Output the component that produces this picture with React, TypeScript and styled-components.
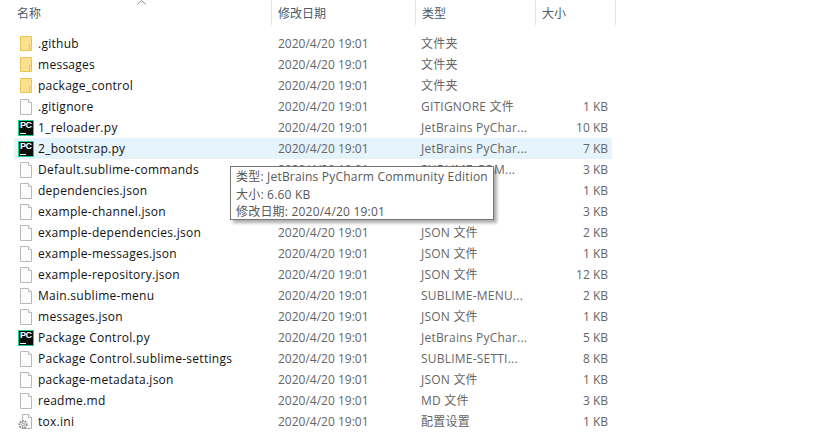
import styled, { createGlobalStyle } from 'styled-components';

type FileKind = 'folder' | 'file' | 'pycharm' | 'config';

type FileRow = {
  name: string;
  kind: FileKind;
  type: string;
  size?: string;
  hovered?: boolean;
};

const DATE = '2020/4/20 19:01';

const rows: FileRow[] = [
  { name: '.github', kind: 'folder', type: '文件夹' },
  { name: 'messages', kind: 'folder', type: '文件夹' },
  { name: 'package_control', kind: 'folder', type: '文件夹' },
  { name: '.gitignore', kind: 'file', type: 'GITIGNORE 文件', size: '1 KB' },
  { name: '1_reloader.py', kind: 'pycharm', type: 'JetBrains PyChar...', size: '10 KB' },
  { name: '2_bootstrap.py', kind: 'pycharm', type: 'JetBrains PyChar...', size: '7 KB', hovered: true },
  { name: 'Default.sublime-commands', kind: 'file', type: 'SUBLIME-COM...', size: '3 KB' },
  { name: 'dependencies.json', kind: 'file', type: 'JSON 文件', size: '1 KB' },
  { name: 'example-channel.json', kind: 'file', type: 'JSON 文件', size: '3 KB' },
  { name: 'example-dependencies.json', kind: 'file', type: 'JSON 文件', size: '2 KB' },
  { name: 'example-messages.json', kind: 'file', type: 'JSON 文件', size: '1 KB' },
  { name: 'example-repository.json', kind: 'file', type: 'JSON 文件', size: '12 KB' },
  { name: 'Main.sublime-menu', kind: 'file', type: 'SUBLIME-MENU...', size: '2 KB' },
  { name: 'messages.json', kind: 'file', type: 'JSON 文件', size: '1 KB' },
  { name: 'Package Control.py', kind: 'pycharm', type: 'JetBrains PyChar...', size: '5 KB' },
  { name: 'Package Control.sublime-settings', kind: 'file', type: 'SUBLIME-SETTI...', size: '8 KB' },
  { name: 'package-metadata.json', kind: 'file', type: 'JSON 文件', size: '1 KB' },
  { name: 'readme.md', kind: 'file', type: 'MD 文件', size: '3 KB' },
  { name: 'tox.ini', kind: 'config', type: '配置设置', size: '1 KB' },
];

const GlobalStyle = createGlobalStyle`
  html, body {
    margin: 0;
    background: #fff;
    overflow: hidden;
  }
  body {
    font-family: "Open Sans", "Noto Sans CJK SC", sans-serif;
    font-size: 12px;
  }
`;

const Page = styled.div`
  position: relative;
  width: 837px;
  height: 440px;
  overflow: hidden;
  background: #fff;
`;

const Header = styled.div`
  display: grid;
  grid-template-columns: 272px 144px 120px 80px;
  height: 27px;
  margin-bottom: 6px;
`;

const HeaderCell = styled.div<{ $pad: number }>`
  position: relative;
  padding: 2px 0 0 ${({ $pad }) => $pad}px;
  height: 25px;
  line-height: 23px;
  color: #4c5a6b;
  border-right: 1px solid #e5e5e5;
  box-sizing: border-box;
`;

const SortArrow = styled.svg`
  position: absolute;
  left: 136px;
  top: 0;
`;

const List = styled.div`
  display: flex;
  flex-direction: column;
  width: 598px;
  margin-left: 14px;
`;

const Row = styled.div<{ $hovered?: boolean }>`
  display: grid;
  grid-template-columns: 258px 143px 129px 64px;
  align-items: center;
  height: 21px;
  padding-right: 4px;
  line-height: 16px;
  background: ${({ $hovered }) => ($hovered ? '#e5f3fb' : 'transparent')};
`;

const NameCell = styled.div`
  display: flex;
  align-items: center;
  gap: 4px;
  padding-left: 4px;
  color: #111;
  letter-spacing: 0.27px;
  white-space: nowrap;
`;

const MetaCell = styled.div<{ $spaced?: boolean }>`
  padding-left: 6px;
  color: #666;
  letter-spacing: ${({ $spaced }) => ($spaced ? '0.22px' : '0')};
  white-space: nowrap;
`;

const SizeCell = styled.div`
  color: #666;
  text-align: right;
  white-space: nowrap;
`;

const IconSlot = styled.span`
  display: inline-flex;
  flex: none;
  width: 16px;
  height: 16px;
  align-items: center;
  justify-content: center;
`;

const PyBadge = styled.span`
  position: relative;
  display: block;
  width: 16px;
  height: 16px;
  box-sizing: border-box;
  background: #0b0f0e;
  border: 1px solid #17d68c;
  color: #fff;
  font-family: "Liberation Sans", sans-serif;
  font-weight: 700;
  font-size: 9px;
  line-height: 9px;
  letter-spacing: -0.4px;
  padding-left: 1px;

  &::after {
    content: '';
    position: absolute;
    left: 1px;
    bottom: 1px;
    width: 6px;
    height: 1px;
    background: #fff;
  }
`;

const Tooltip = styled.div`
  position: absolute;
  left: 230px;
  top: 166px;
  width: 264px;
  height: 54px;
  box-sizing: border-box;
  padding: 1px 5px;
  background: #fff;
  border: 1px solid #767676;
  box-shadow: 3px 3px 3px rgba(0, 0, 0, 0.32);
  color: #575757;
  line-height: 17.5px;
  letter-spacing: 0.2px;
  white-space: nowrap;
`;

const FileIcon = ({ kind }: { kind: FileKind }) => {
  if (kind === 'pycharm') {
    return <PyBadge>PC</PyBadge>;
  }
  if (kind === 'folder') {
    return (
      <svg width="16" height="16" viewBox="0 0 16 16">
        <path d="M2.5 0.5 H13.5 V14.5 H2.5 Z" fill="#fbe08f" stroke="#ecc550" />
        <path d="M11.5 14.5 V8.5 H13.5" fill="none" stroke="#ecc550" />
      </svg>
    );
  }
  if (kind === 'config') {
    return (
      <svg width="16" height="16" viewBox="0 0 16 16" overflow="visible">
        <path d="M4.5 0.5 H10.5 L13.5 3.5 V14.5 H4.5 Z" fill="#fbfbfb" stroke="#b4b4b4" />
        <path d="M10.5 0.5 V3.5 H13.5" fill="#fff" stroke="#b4b4b4" />
        <circle cx="5" cy="10.5" r="3.6" fill="none" stroke="#8f8f8f" strokeWidth="2" strokeDasharray="1.6 1" />
        <circle cx="5" cy="10.5" r="1.6" fill="#e4e4e4" stroke="#9c9c9c" strokeWidth="0.8" />
      </svg>
    );
  }
  return (
    <svg width="16" height="16" viewBox="0 0 16 16">
      <path d="M2.5 0.5 H10.5 L13.5 3.5 V15.5 H2.5 Z" fill="#fcfcfc" stroke="#b9b9b9" />
      <path d="M10.5 0.5 V3.5 H13.5" fill="#fff" stroke="#b9b9b9" />
    </svg>
  );
};

export default function App() {
  return (
    <Page>
      <GlobalStyle />
      <Header>
        <HeaderCell $pad={17}>
          名称
          <SortArrow width="11" height="5" viewBox="0 0 11 5">
            <path d="M1 4.5 L5.5 0.5 L10 4.5" fill="none" stroke="#8a8a8a" />
          </SortArrow>
        </HeaderCell>
        <HeaderCell $pad={6}>修改日期</HeaderCell>
        <HeaderCell $pad={6}>类型</HeaderCell>
        <HeaderCell $pad={6}>大小</HeaderCell>
      </Header>
      <List>
        {rows.map((row) => (
          <Row key={row.name} $hovered={row.hovered}>
            <NameCell>
              <IconSlot>
                <FileIcon kind={row.kind} />
              </IconSlot>
              {row.name}
            </NameCell>
            <MetaCell>{DATE}</MetaCell>
            <MetaCell $spaced>{row.type}</MetaCell>
            <SizeCell>{row.size}</SizeCell>
          </Row>
        ))}
      </List>
      <Tooltip>
        类型: JetBrains PyCharm Community Edition
        <br />
        大小: 6.60 KB
        <br />
        修改日期: 2020/4/20 19:01
      </Tooltip>
    </Page>
  );
}
